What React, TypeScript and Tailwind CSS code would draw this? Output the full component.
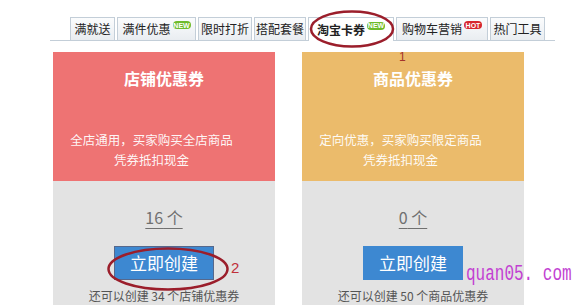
import type { ReactNode } from 'react'

const cjk = { fontFamily: '"Noto Sans CJK SC", "Noto Sans", sans-serif' }

interface Tab {
  label: string
  width: string
  badge?: 'new' | 'hot'
  active?: boolean
}

const tabs: Tab[] = [
  { label: '满就送', width: 'w-[45px]' },
  { label: '满件优惠', width: 'w-[79px]', badge: 'new' },
  { label: '限时打折', width: 'w-[54px]' },
  { label: '搭配套餐', width: 'w-[52px]' },
  { label: '淘宝卡券', width: 'w-[86px]', badge: 'new', active: true },
  { label: '购物车营销', width: 'w-[92px]', badge: 'hot' },
  { label: '热门工具', width: 'w-[55px]' },
]

function Badge({ kind }: { kind: 'new' | 'hot' }) {
  return (
    <span
      className={
        'ml-[2px] -translate-y-[4px] inline-flex h-[8px] w-[18px] items-center justify-center rounded-[4px] text-[7px] leading-none font-bold text-white ' +
        (kind === 'new' ? 'bg-[#6ebb2c]' : 'bg-[#d7262e]')
      }
      style={{ fontFamily: '"Liberation Sans", Arial, sans-serif' }}
    >
      {kind === 'new' ? 'NEW' : 'HOT'}
    </span>
  )
}

function TabBar() {
  return (
    <div className="ml-[50px] mt-[17px] flex w-[505px] gap-[2px] border-b border-[#c3ced8] pl-[20px]">
      {tabs.map((t) => (
        <div
          key={t.label}
          className={
            'flex h-[23px] items-center justify-center border border-b-0 border-[#c3ced8] text-[12px] text-[#222] ' +
            t.width +
            (t.active
              ? ' -mb-px h-[24px] bg-white font-bold'
              : ' bg-gradient-to-b from-[#fbfcfd] to-[#e9edf1]')
          }
          style={cjk}
        >
          {t.label}
          {t.badge && <Badge kind={t.badge} />}
        </div>
      ))}
    </div>
  )
}

interface CouponProps {
  title: string
  color: string
  lines: [string, string]
  count: number
  remain: string
  framed?: boolean
  children?: ReactNode
}

function CouponCard({ title, color, lines, count, remain, framed, children }: CouponProps) {
  return (
    <div className="relative flex h-[253px] w-[222px] flex-col overflow-hidden bg-[#e3e3e3]" style={cjk}>
      <div className={'flex h-[134px] flex-col items-center ' + color}>
        <h3 className="mt-[14px] text-[16px] leading-[24px] font-bold text-white">{title}</h3>
        <p className="mt-[40px] pr-[25px] text-center text-[12.5px] leading-[20px] text-white/95">
          {lines[0]}
          <br />
          {lines[1]}
        </p>
      </div>
      <div className="flex flex-col items-center">
        <span className="mt-[24px] text-[16px] leading-[24px] text-[#707070] underline underline-offset-[4px]">
          {count} 个
        </span>
        <button
          type="button"
          className={
            'mt-[17px] h-[34px] w-[100px] bg-[#3d88d1] text-[17px] text-white' +
            (framed ? ' border border-[#56688c]' : '')
          }
        >
          立即创建
        </button>
        <p className="mt-[7px] text-[12px] leading-[18px] text-[#555]">{remain}</p>
      </div>
      {children}
    </div>
  )
}

export default function App() {
  return (
    <div className="relative h-[308px] w-[580px] overflow-hidden bg-white">
      <TabBar />

      <div className="mt-[11px] ml-[53px] flex gap-[27px]">
        <CouponCard
          title="店铺优惠券"
          color="bg-[#ee7373]"
          lines={['全店通用，买家购买全店商品', '凭券抵扣现金']}
          count={16}
          remain="还可以创建 34 个店铺优惠券"
          framed
        />
        <CouponCard
          title="商品优惠券"
          color="bg-[#ebbb6b]"
          lines={['定向优惠，买家购买限定商品', '凭券抵扣现金']}
          count={0}
          remain="还可以创建 50 个商品优惠券"
        />
      </div>

      {/* annotation marks */}
      <svg className="pointer-events-none absolute top-[9px] left-[308px]" width="88" height="40">
        <ellipse cx="44" cy="20" rx="41" ry="17.5" fill="none" stroke="#9b1e2b" strokeWidth="2.5" />
      </svg>
      <span className="absolute top-[51px] left-[399px] text-[12px] leading-none text-[#a3322a]" style={{ fontFamily: '"Liberation Sans", Arial, sans-serif' }}>
        1
      </span>
      <svg className="pointer-events-none absolute top-[246px] left-[106px]" width="124" height="46">
        <ellipse cx="62" cy="23" rx="59.5" ry="20.5" fill="none" stroke="#9b1e2b" strokeWidth="2.5" />
      </svg>
      <span className="absolute top-[260px] left-[231px] text-[15px] leading-none text-[#c0303a]" style={{ fontFamily: '"Liberation Sans", Arial, sans-serif' }}>
        2
      </span>

      <span
        className="absolute top-[262px] left-[466px] inline-block origin-top scale-y-[1.35] text-[16px] leading-[18px] text-[#c23fd2]"
        style={{ fontFamily: '"Liberation Mono", "DejaVu Sans Mono", monospace' }}
      >
        quan05. com
      </span>
    </div>
  )
}
